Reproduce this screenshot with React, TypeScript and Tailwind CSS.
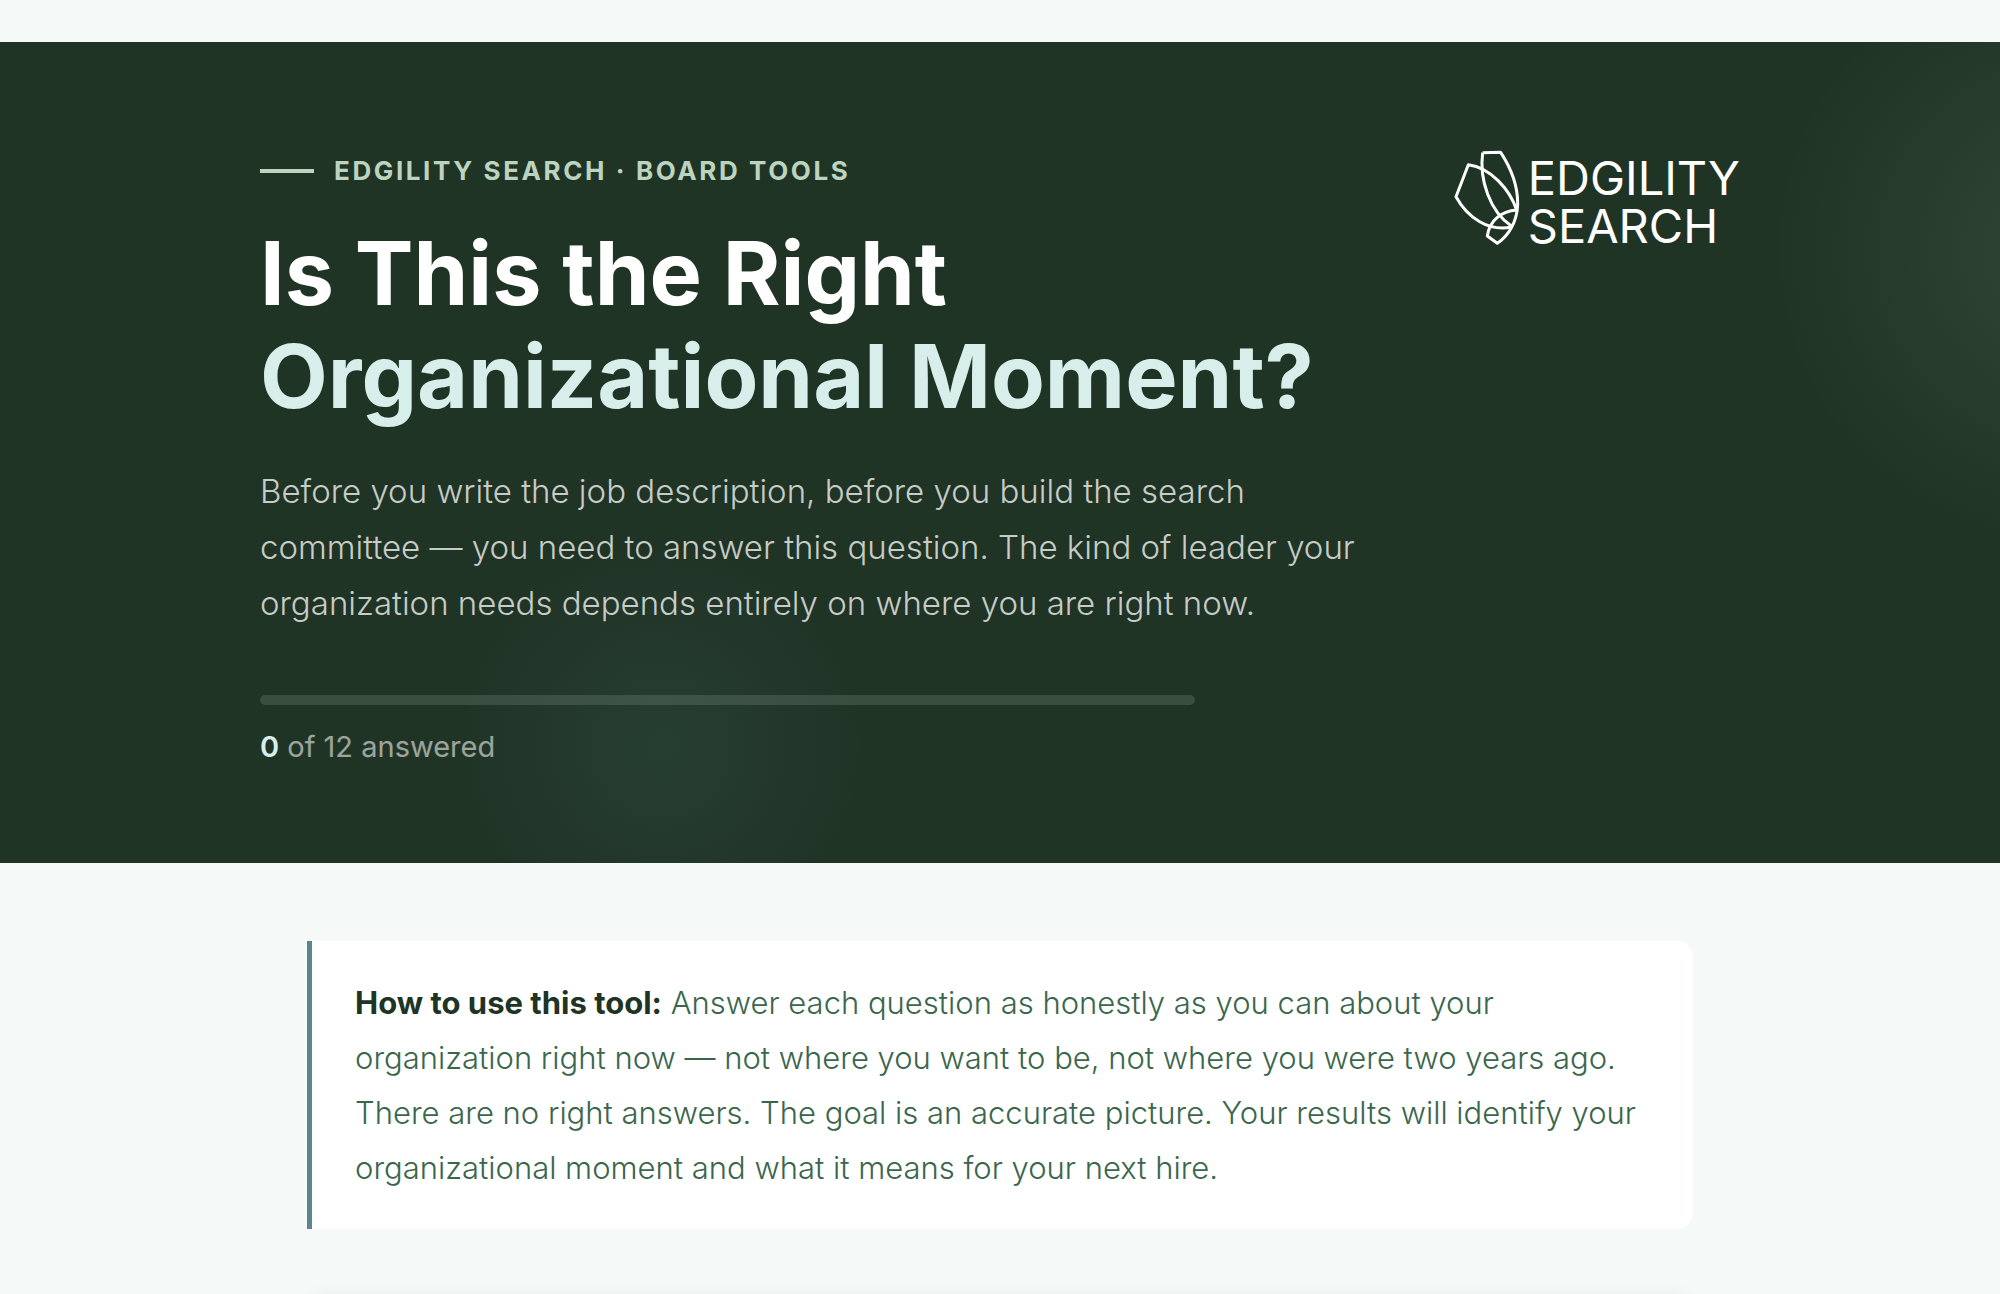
function LogoMark() {
  return (
    <svg
      viewBox="72 60 198 285"
      className="w-[66px] h-[95px] shrink-0"
      fill="none"
      stroke="currentColor"
      strokeWidth="9"
      strokeLinejoin="round"
      aria-hidden="true"
    >
      <path d="M158 68 L212 67 C248 122 264 172 263 224 C261 275 236 317 202 340 L172 318 C178 272 214 243 260 240" />
      <path d="M158 68 C147 150 180 245 245 289" />
      <path d="M260 240 C240 180 182 112 115 104 L78 200 C112 262 175 306 245 291" />
    </svg>
  )
}

function Logo() {
  return (
    <a href="#" className="flex items-start gap-2 text-white">
      <LogoMark />
      <span className="pt-1 text-[47px] leading-[48px]">
        EDGILITY
        <br />
        SEARCH
      </span>
    </a>
  )
}

function Hero({ answered, total }: { answered: number; total: number }) {
  return (
    <header className="relative overflow-hidden bg-[#203426] px-6">
      <div className="absolute top-[-92px] right-[-370px] size-[600px] rounded-full bg-[radial-gradient(circle,rgba(184,212,188,0.11)_0%,transparent_70%)]" />
      <div className="absolute bottom-[-88px] left-[456px] size-[410px] rounded-full bg-[radial-gradient(circle,rgba(90,138,143,0.11)_0%,transparent_70%)]" />

      <div className="relative max-w-[1480px] mx-auto pt-[108px] pb-24">
        <div className="flex items-start justify-between">
          <div>
            <div className="flex items-center gap-5 mb-[30px] text-[#bcd4bf]">
              <span className="w-[54px] h-1 bg-current" />
              <p className="text-[26px] leading-[42px] font-bold tracking-widest uppercase">
                Edgility Search · Board Tools
              </p>
            </div>
            <h1 className="text-[88px] leading-[103px] font-bold text-white">
              Is This the Right
              <br />
              <span className="text-[#d8eeea]">Organizational Moment?</span>
            </h1>
          </div>
          <Logo />
        </div>

        <p className="max-w-[1120px] mt-[35px] text-[33px] leading-[56px] font-light text-white/75">
          Before you write the job description, before you build the search committee — you need to answer this
          question. The kind of leader your organization needs depends entirely on where you are right now.
        </p>

        <div className="max-w-[935px] h-[10px] mt-16 rounded-full bg-white/12 overflow-hidden">
          <div className="h-full bg-[#d8eeea]" style={{ width: `${(answered / total) * 100}%` }} />
        </div>
        <p className="mt-[22px] text-[29px] leading-10 text-white/55">
          <strong className="font-semibold text-[#d8eeea]">{answered}</strong> of {total} answered
        </p>
      </div>
    </header>
  )
}

export default function App() {
  return (
    <div className="min-h-screen pt-[42px] bg-[#f5f9f8] font-['Inter',sans-serif]">
      <Hero answered={0} total={12} />

      <main className="max-w-[1386px] mx-auto pt-[78px]">
        <div className="px-[43px] py-[34px] bg-white border-l-[5px] border-[#5a868c] rounded-r-2xl">
          <p className="text-[31px] leading-[55px] font-light text-[#3a664d]">
            <strong className="font-bold text-[#203426]">How to use this tool:</strong> Answer each question as
            honestly as you can about your organization right now — not where you want to be, not where you were two
            years ago. There are no right answers. The goal is an accurate picture. Your results will identify your
            organizational moment and what it means for your next hire.
          </p>
        </div>

        {/* Question card */}
        <section className="mt-[66px] mb-16 p-12 bg-white rounded-2xl shadow-[0_3px_18px_rgba(32,52,39,0.08)]" />
      </main>
    </div>
  )
}
